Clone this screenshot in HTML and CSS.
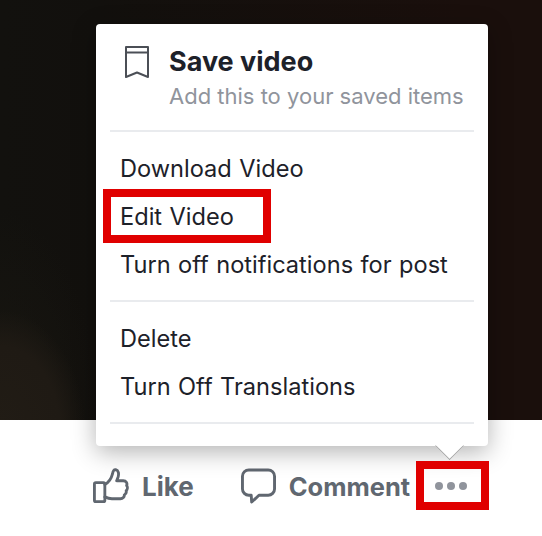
FILE: index.html
```html
<!DOCTYPE html>
<html lang="en">
<head>
<meta charset="utf-8">
<title>Video menu</title>
<link rel="stylesheet" href="styles.css">
</head>
<body>
<div class="video"></div>
<div class="actions">
  <div class="action like">
    <svg class="icon-like" width="36" height="36" viewBox="0 0 38 38" fill="none" stroke="#606770" stroke-width="3" stroke-linejoin="round" stroke-linecap="round">
      <rect x="1.500" y="15.500" width="11" height="20" rx="1.500"/>
      <path d="M12.500 17.500C16 15.500 19.500 10.500 20.500 6.500C21 3.500 22 1.500 24 1.800C27 2.500 27.500 6 26.500 9.500L25 13.500H32C35 13.500 36.500 16 35.500 18.500C36.800 20 36.500 22.500 35 24C35.500 26 35 27.500 33 28.500C33.300 30.500 31.500 32.500 29 32.500H20C17 32.500 14.500 31.500 12.500 30.500"/>
    </svg>
    <span>Like</span>
  </div>
  <div class="action comment">
    <svg class="icon-comment" width="35" height="36" viewBox="0 0 36 36" fill="none" stroke="#606770" stroke-width="3" stroke-linejoin="round">
      <path d="M8 1.500H28C31.500 1.500 34.500 4.500 34.500 8V21C34.500 24.500 31.500 27.500 28 27.500H18.500L11 34.500L10.500 27.500H8C4.500 27.500 1.500 24.500 1.500 21V8C1.500 4.500 4.500 1.500 8 1.500Z"/>
    </svg>
    <span>Comment</span>
  </div>
  <div class="more"><i></i><i></i><i></i></div>
</div>

<div class="menu">
  <div class="save">
    <svg class="icon-save" width="26" height="34" viewBox="0 0 26 34" fill="none" stroke="#4b4f56" stroke-width="2" stroke-linejoin="round">
      <path d="M2 2H24V32L13 27.500L2 32Z"/>
      <path d="M2 7.500H24"/>
    </svg>
    <div class="save-text">
      <div class="save-title">Save video</div>
      <div class="save-sub">Add this to your saved items</div>
    </div>
  </div>
  <div class="divider"></div>
  <div class="group">
    <div class="item">Download Video</div>
    <div class="item">Edit Video</div>
    <div class="item">Turn off notifications for post</div>
  </div>
  <div class="divider"></div>
  <div class="group">
    <div class="item">Delete</div>
    <div class="item">Turn Off Translations</div>
  </div>
  <div class="divider"></div>
</div>
<div class="arrow"></div>
<div class="mark mark-edit"></div>
<div class="mark mark-more"></div>
</body>
</html>
```
FILE: styles.css
```css
* { box-sizing: border-box; }
html, body { margin: 0; padding: 0; }
body {
  width: 542px;
  height: 536px;
  position: relative;
  overflow: hidden;
  background: #fff;
  font-family: Inter, "Liberation Sans", sans-serif;
  color: #1d2129;
}
.video {
  height: 420px;
  background:
    radial-gradient(ellipse 85px 120px at 0 430px, #211c15 0, #1f1a14 70%, rgba(31,26,20,0) 100%),
    radial-gradient(ellipse 100px 220px at 0 430px, #191711 0, rgba(25,23,17,0) 100%),
    linear-gradient(90deg, #12110e 0, #12100d 18%, #1a0f0c 85%, #1a0f0c 100%);
}
.actions {
  display: flex;
  align-items: center;
  height: 116px;
  padding: 40px 0 24px 93px;
  color: #606770;
  font-weight: 700;
  font-size: 26px;
}
.action { display: flex; align-items: center; }
.like { gap: 13px; margin-right: 48px; }
.like span { margin-right: -1px; }
.comment { gap: 13px; margin-right: 25px; font-size: 25.500px; }
.more { display: flex; gap: 4px; }
.more i { width: 8px; height: 8px; border-radius: 50%; background: #90949c; }
.menu {
  position: absolute;
  left: 96px;
  top: 24px;
  width: 392px;
  height: 422px;
  padding: 0 14px;
  background: #fff;
  border-radius: 4px;
  box-shadow: 0 6px 24px rgba(0, 0, 0, 0.3);
}
.save {
  display: flex;
  height: 106px;
  padding: 21px 0 0 14px;
  gap: 19px;
}
.icon-save { flex: none; }
.save-title { font-size: 27px; font-weight: 700; line-height: 34px; }
.save-sub { font-size: 22px; line-height: 34px; color: #90949c; }
.divider { height: 2px; background: #e9ebee; }
.group { padding: 13px 0 11px; }
.item {
  height: 48px;
  line-height: 48px;
  padding-left: 10px;
  font-size: 23.600px;
  word-spacing: 0.800px;
}
.arrow {
  position: absolute;
  left: 439.400px;
  top: 435.400px;
  width: 21.200px;
  height: 21.200px;
  background: #fff;
  transform: rotate(45deg);
  clip-path: polygon(100% 0, 100% 100%, 0 100%);
  border-right: 1px solid #a8a8a8;
  border-bottom: 1px solid #a8a8a8;
}
.mark {
  position: absolute;
  border: 8px solid #e00000;
}
.mark-edit { left: 103px; top: 189px; width: 168px; height: 54px; }
.mark-more { left: 416px; top: 461px; width: 73px; height: 49px; }
```
